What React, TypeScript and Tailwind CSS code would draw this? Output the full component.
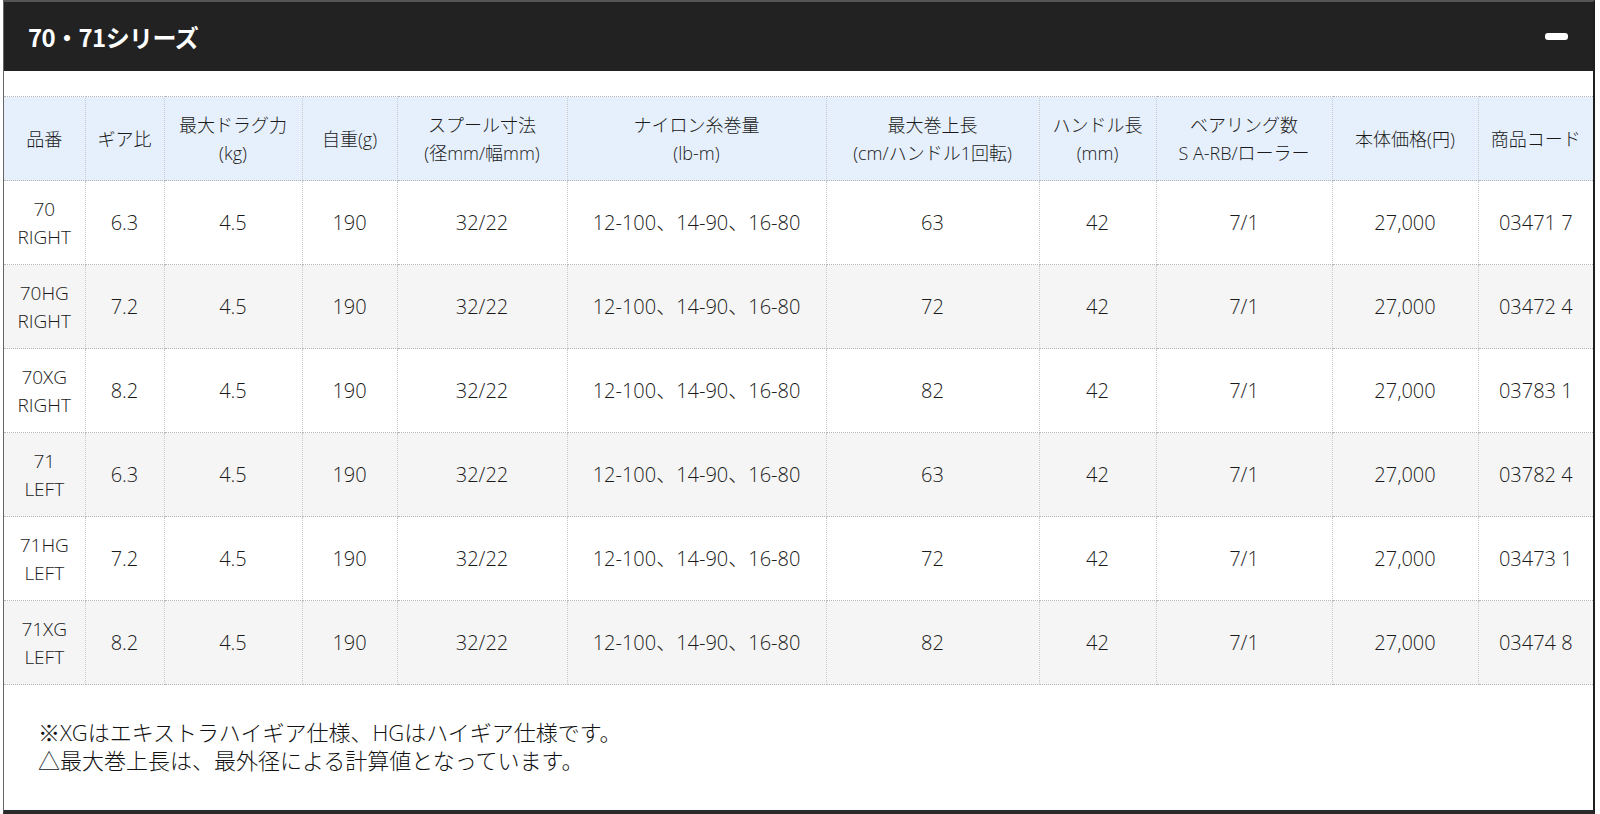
const columns = [
  { label: ['品番'], w: 'w-[81px]' },
  { label: ['ギア比'], w: 'w-[79px]' },
  { label: ['最大ドラグ力', '(kg)'], w: 'w-[138px]' },
  { label: ['自重(g)'], w: 'w-[95px]' },
  { label: ['スプール寸法', '(径mm/幅mm)'], w: 'w-[170px]' },
  { label: ['ナイロン糸巻量', '(lb-m)'], w: 'w-[259px]' },
  { label: ['最大巻上長', '(cm/ハンドル1回転)'], w: 'w-[213px]' },
  { label: ['ハンドル長', '(mm)'], w: 'w-[117px]' },
  { label: ['ベアリング数', 'S A-RB/ローラー'], w: 'w-[176px]' },
  { label: ['本体価格(円)'], w: 'w-[146px]' },
  { label: ['商品コード'], w: 'w-[115px]' },
]

const rows = [
  { model: ['70', 'RIGHT'], gear: '6.3', retrieve: '63', code: '03471 7' },
  { model: ['70HG', 'RIGHT'], gear: '7.2', retrieve: '72', code: '03472 4' },
  { model: ['70XG', 'RIGHT'], gear: '8.2', retrieve: '82', code: '03783 1' },
  { model: ['71', 'LEFT'], gear: '6.3', retrieve: '63', code: '03782 4' },
  { model: ['71HG', 'LEFT'], gear: '7.2', retrieve: '72', code: '03473 1' },
  { model: ['71XG', 'LEFT'], gear: '8.2', retrieve: '82', code: '03474 8' },
]

const cell =
  'h-[84px] border-y border-dotted border-y-[#b5b5b5] border-x border-x-[#c9c9c9] border-x-solid text-center align-middle px-1 first:border-l-0 last:border-r-0'

export default function App() {
  return (
    <div
      className="min-h-screen bg-white pl-[3px] text-[#1a1a1a]"
      style={{ fontFamily: '"Open Sans", "Noto Sans CJK JP", sans-serif' }}
    >
      <div className="w-[1592px] h-[814px] flex flex-col border-t-2 border-t-[#555] border-l border-l-[#666] border-r-2 border-r-[#1e1e1e] border-b-4 border-b-[#2a2a2a]">
        <div className="h-[69px] shrink-0 bg-[#222] flex items-center justify-between pl-6 pr-[25px]">
          <h2
            className="text-white text-[24px] font-bold tracking-tight"
            style={{ fontFamily: '"Noto Sans CJK JP", sans-serif' }}
          >
            70・71シリーズ
          </h2>
          <button type="button" className="w-[23px] h-[7px] rounded-[3px] bg-white" aria-label="close" />
        </div>

        <div className="pt-[25px]">
          <table className="w-full table-fixed border-collapse text-[20px] leading-[28px] font-light">
            <colgroup>
              {columns.map((c) => (
                <col key={c.label[0]} className={c.w} />
              ))}
            </colgroup>
            <thead>
              <tr className="bg-[#e6f0fc]">
                {columns.map((c) => (
                  <th key={c.label[0]} className={`${cell} text-[18px] font-light`}>
                    {c.label.map((l) => (
                      <div key={l}>{l}</div>
                    ))}
                  </th>
                ))}
              </tr>
            </thead>
            <tbody>
              {rows.map((r, i) => (
                <tr key={r.model[0]} className={i % 2 === 1 ? 'bg-[#f5f5f5]' : 'bg-white'}>
                  <td className={`${cell} text-[19px]`}>
                    <div>{r.model[0]}</div>
                    <div>{r.model[1]}</div>
                  </td>
                  <td className={cell}>{r.gear}</td>
                  <td className={cell}>4.5</td>
                  <td className={cell}>190</td>
                  <td className={cell}>32/22</td>
                  <td className={cell}>12-100、14-90、16-80</td>
                  <td className={cell}>{r.retrieve}</td>
                  <td className={cell}>42</td>
                  <td className={cell}>7/1</td>
                  <td className={cell}>27,000</td>
                  <td className={cell}>{r.code}</td>
                </tr>
              ))}
            </tbody>
          </table>
        </div>

        <div className="pl-[34px] pt-[33px] text-[22px] leading-[28px] font-light text-[#111]">
          <p>※XGはエキストラハイギア仕様、HGはハイギア仕様です。</p>
          <p>△最大巻上長は、最外径による計算値となっています。</p>
        </div>
      </div>
    </div>
  )
}
